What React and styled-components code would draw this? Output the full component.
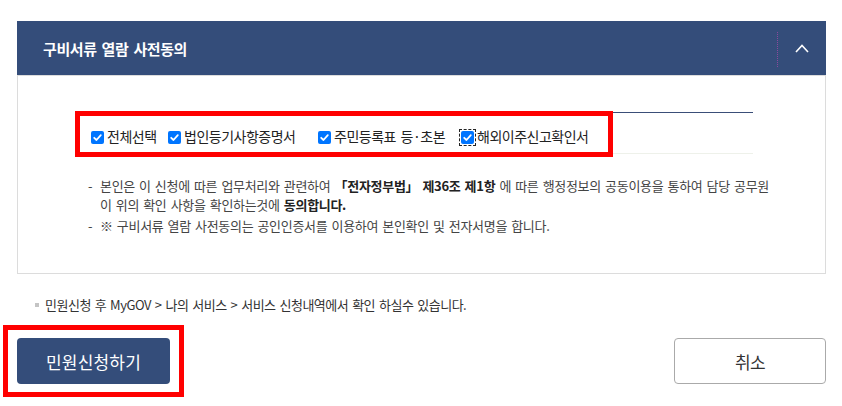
import React, { useState } from 'react';
import styled, { createGlobalStyle } from 'styled-components';

const GlobalStyle = createGlobalStyle`
  body {
    margin: 0;
    background: #fff;
    font-family: "Noto Sans CJK KR", "Noto Sans", sans-serif;
  }
`;

const options = [
  { id: 'all', label: '전체선택', w: 77 },
  { id: 'corp', label: '법인등기사항증명서', w: 150 },
  { id: 'resident', label: '주민등록표 등·초본', w: 143 },
  { id: 'abroad', label: '해외이주신고확인서', focused: true },
];

function Check({ checked, focused }) {
  return (
    <CheckBox $focused={focused}>
      {checked && (
        <svg width="13" height="13" viewBox="0 0 13 13">
          <rect x="0" y="0" width="13" height="13" rx="2" fill="#0075ff" />
          <polyline points="3.2,6.8 5.5,9 9.8,4.2" fill="none" stroke="#fff" strokeWidth="1.8" strokeLinecap="round" strokeLinejoin="round" />
        </svg>
      )}
    </CheckBox>
  );
}

export default function App() {
  const [open, setOpen] = useState(true);
  const [checked, setChecked] = useState({ all: true, corp: true, resident: true, abroad: true });

  return (
    <Page>
      <GlobalStyle />
      <Header>
        <Title>구비서류 열람 사전동의</Title>
        <Toggle onClick={() => setOpen(!open)}>
          <svg width="14" height="9" viewBox="0 0 14 9">
            <polyline points="1,8 7,1.5 13,8" fill="none" stroke="#fff" strokeWidth="1.6" />
          </svg>
        </Toggle>
      </Header>
      {open && (
        <Body>
          <CheckRow>
            {options.map((o) => (
              <CheckItem
                key={o.id}
                $w={o.w}
                onClick={() => setChecked({ ...checked, [o.id]: !checked[o.id] })}
              >
                <Check checked={checked[o.id]} focused={o.focused} />
                <CheckLabel>{o.label}</CheckLabel>
              </CheckItem>
            ))}
          </CheckRow>
          <Notes>
            <Note>
              <Dash>-</Dash>
              <span>
                본인은 이 신청에 따른 업무처리와 관련하여 <b>「전자정부법」 제36조 제1항</b> 에 따른 행정정보의 공동이용을 통하여 담당 공무원
                <br />
                이 위의 확인 사항을 확인하는것에 <b>동의합니다.</b>
              </span>
            </Note>
            <Note>
              <Dash>-</Dash>
              <span>※ 구비서류 열람 사전동의는 공인인증서를 이용하여 본인확인 및 전자서명을 합니다.</span>
            </Note>
          </Notes>
        </Body>
      )}
      <Footnote>
        <Bullet />
        민원신청 후 MyGOV &gt; 나의 서비스 &gt; 서비스 신청내역에서 확인 하실수 있습니다.
      </Footnote>
      <Actions>
        <Marked>
          <PrimaryButton>민원신청하기</PrimaryButton>
        </Marked>
        <GhostButton>취소</GhostButton>
      </Actions>
    </Page>
  );
}

const Page = styled.div`
  padding: 21px 16px 10px 17px;
`;

const Header = styled.div`
  height: 54px;
  background-color: #344d7a;
  display: flex;
  align-items: center;
  justify-content: space-between;
  padding-left: 26px;
`;

const Title = styled.h2`
  margin: 0;
  color: #fff;
  font-size: 15px;
  font-weight: 700;
  letter-spacing: -0.4px;
  word-spacing: 2px;
`;

const Toggle = styled.button`
  width: 49px;
  height: 35px;
  margin-top: 2px;
  border: 0;
  border-left: 1px dotted #8c4a9c;
  background: transparent;
  display: flex;
  align-items: center;
  justify-content: center;
  padding: 0 0 2px 0;
  cursor: pointer;
`;

const Body = styled.div`
  border: 1px solid #dcdcdc;
  padding: 36px 72px 38px 70px;
`;

const CheckRow = styled.div`
  position: relative;
  display: flex;
  align-items: center;
  height: 20px;
  padding: 13px 0 7px 3px;
  border-top: 1px solid #3a4e78;
  border-bottom: 1px solid #eef1ea;

  &::after {
    content: '';
    position: absolute;
    left: -13px;
    top: -2px;
    width: 538px;
    height: 46px;
    box-sizing: border-box;
    border: 5px solid #ff0000;
    pointer-events: none;
  }
`;

const CheckItem = styled.label`
  display: flex;
  align-items: center;
  gap: 3px;
  flex: none;
  width: ${(props) => (props.$w ? `${props.$w}px` : 'auto')};
  cursor: pointer;
`;

const CheckBox = styled.span`
  width: 13px;
  height: 13px;
  display: flex;
  margin-top: 2px;
  outline: ${(props) => (props.$focused ? '1px dashed #222' : 'none')};
  outline-offset: 1px;
`;

const CheckLabel = styled.span`
  font-size: 14px;
  color: #222;
  letter-spacing: -0.5px;
  word-spacing: 2px;
  white-space: nowrap;
`;

const Notes = styled.div`
  margin-top: 22px;
  margin-right: -60px;
`;

const Note = styled.div`
  display: flex;
  font-size: 13px;
  line-height: 19px;
  color: #444;
  letter-spacing: -0.3px;
  word-spacing: 1.5px;
  white-space: nowrap;

  & + & {
    margin-top: 2px;
  }

  b {
    color: #222;
    font-weight: 700;
  }
`;

const Dash = styled.span`
  width: 12px;
  flex: none;
`;

const Footnote = styled.p`
  margin: 22px 0 0;
  padding-left: 18px;
  display: flex;
  align-items: center;
  font-size: 13px;
  line-height: 18px;
  color: #333;
  letter-spacing: -0.5px;
  word-spacing: 1.5px;
  white-space: pre;
`;

const Bullet = styled.span`
  width: 4px;
  height: 4px;
  background: #c4c4c4;
  margin-right: 6px;
`;

const Actions = styled.div`
  margin-top: 11px;
  display: flex;
  justify-content: space-between;
  align-items: center;
`;

const Marked = styled.div`
  display: flex;
  margin-left: -14px;
  padding: 8px 9px;
  border: 5px solid #ff0000;
`;

const PrimaryButton = styled.button`
  width: 153px;
  height: 46px;
  border: 0;
  border-radius: 4px;
  background: #344d7a;
  color: #fff;
  font-family: inherit;
  font-size: 17px;
  letter-spacing: 0.2px;
  cursor: pointer;
`;

const GhostButton = styled.button`
  width: 152px;
  height: 46px;
  border: 1px solid #aaaaaa;
  border-radius: 4px;
  background: #fff;
  color: #333;
  font-family: inherit;
  font-size: 17px;
  letter-spacing: -0.6px;
  cursor: pointer;
`;
